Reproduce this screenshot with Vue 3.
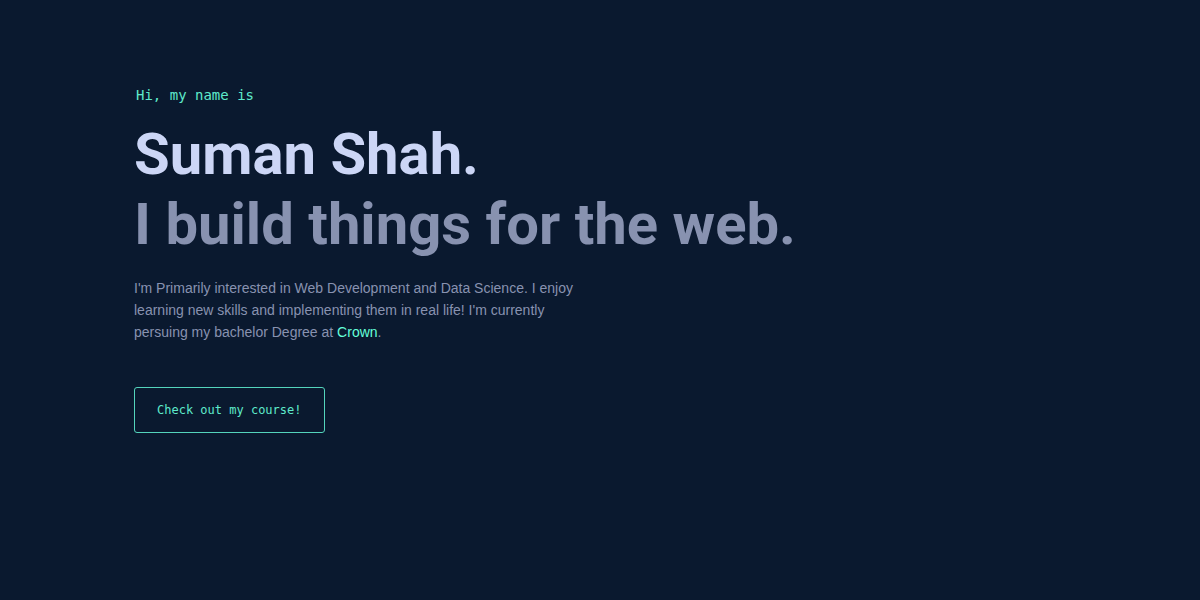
<script setup>
const intro = 'Hi, my name is'
</script>

<template>
  <main class="hero">
    <p class="intro">{{ intro }}</p>
    <h1 class="name">Suman Shah.</h1>
    <h2 class="tagline">I build things for the web.</h2>
    <p class="bio">
      I'm Primarily interested in Web Development and Data Science. I enjoy
      <br />learning new skills and implementing them in real life! I'm currently
      <br />persuing my bachelor Degree at <a href="#crown">Crown</a>.
    </p>
    <a class="course" href="#course">Check out my course!</a>
  </main>
</template>

<style>
body {
  margin: 0;
  background: #0a192f;
}
</style>

<style scoped>
.hero {
  box-sizing: border-box;
  min-height: 100vh;
  padding: 83px 134px 48px;
  background: #0a192f;
  font-family: Roboto, "Liberation Sans", sans-serif;
}

.intro {
  margin: 0 0 12px;
  padding-left: 2px;
  color: #5eeacb;
  font: 14px/24px "DejaVu Sans Mono", monospace;
}

.name,
.tagline {
  margin: 0;
  font-size: 58px;
  line-height: 70px;
  font-weight: 700;
}

.name {
  color: #ccd6f6;
}

.tagline {
  color: #8892b0;
}

.bio {
  margin: 18px 0 44px;
  color: #8892b0;
  font-family: "Liberation Sans", sans-serif;
  font-size: 14px;
  line-height: 22px;
}

.bio a {
  color: #64ffda;
  text-decoration: none;
}

.course {
  display: inline-block;
  padding: 14px 22px;
  border: 1px solid #54d4bc;
  border-radius: 3px;
  color: #5eeacb;
  font: 12px/16px "DejaVu Sans Mono", monospace;
  text-decoration: none;
}
</style>
